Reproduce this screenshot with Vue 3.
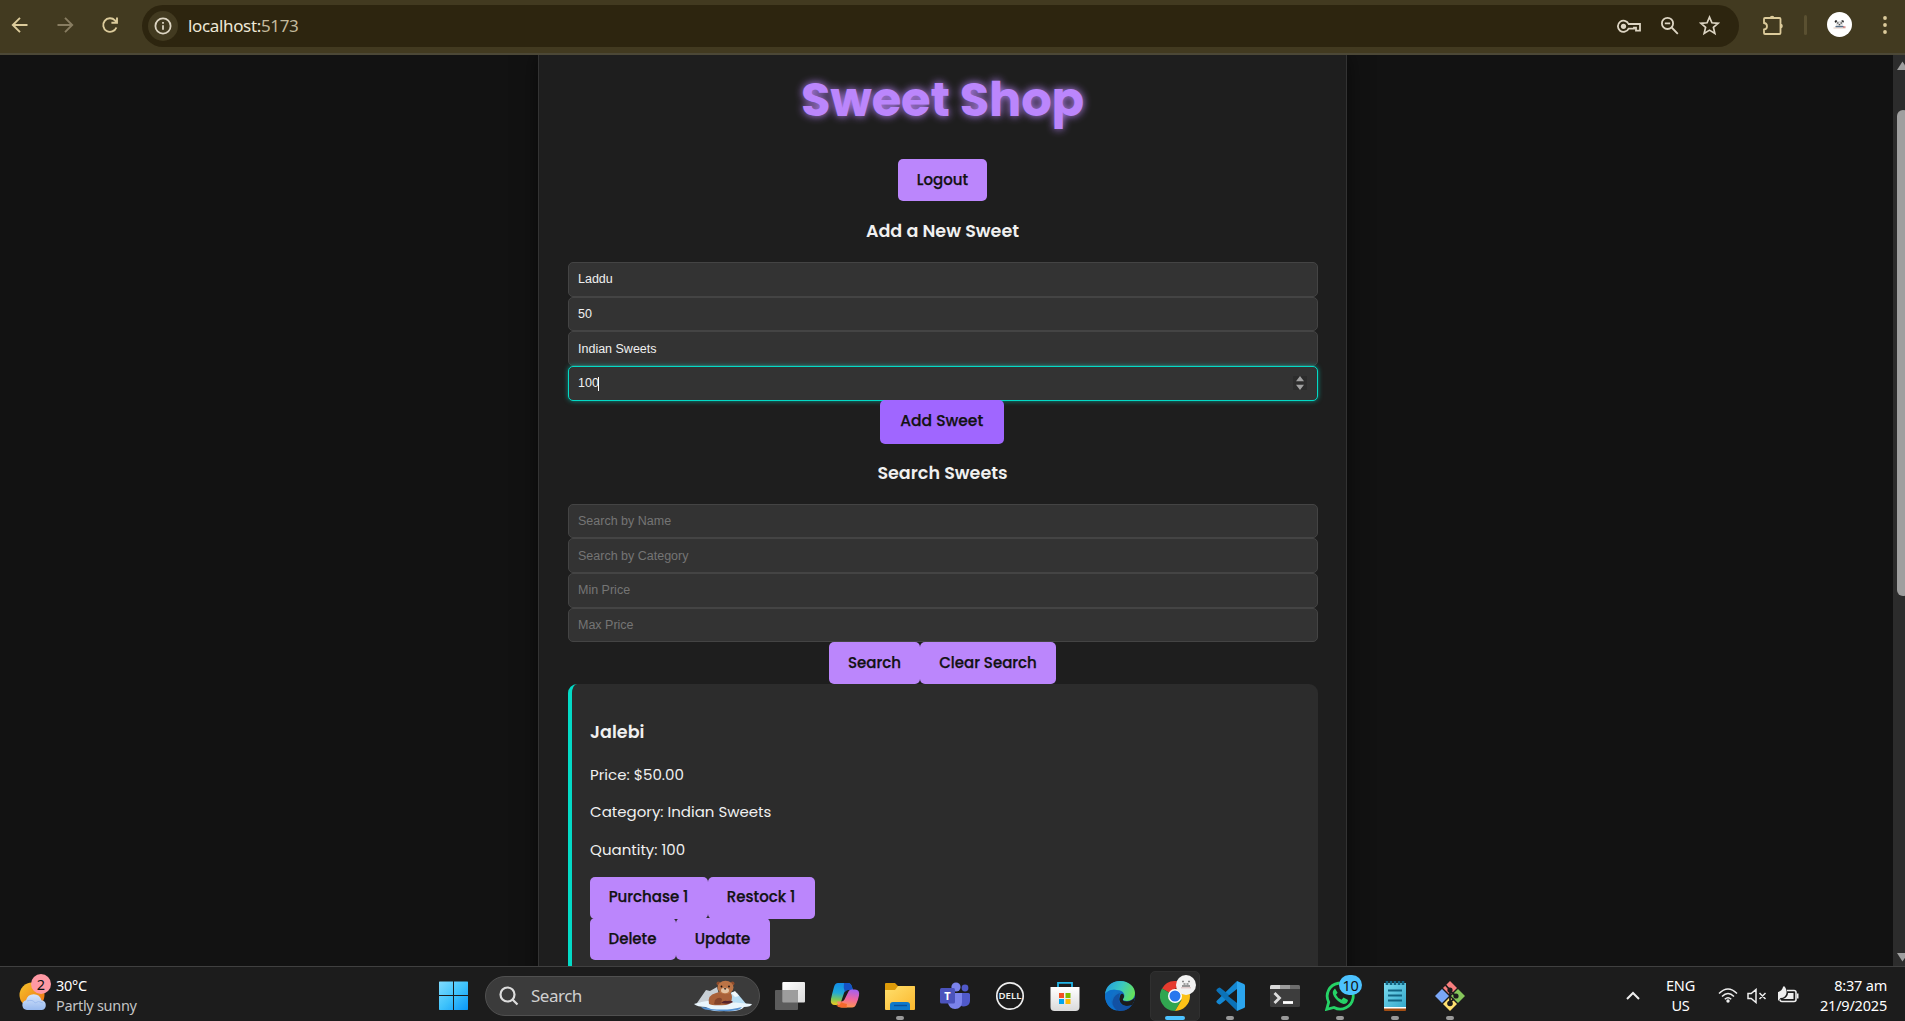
<script setup>
const newSweet = [
  { value: 'Laddu' },
  { value: '50' },
  { value: 'Indian Sweets' },
  { value: '100', active: true },
]
const searchFields = ['Search by Name', 'Search by Category', 'Min Price', 'Max Price']
</script>

<template>
  <div class="screen">
    <header class="toolbar">
      <nav class="nav-icons">
        <svg viewBox="0 0 20 20" class="nav-icon"><path d="M17.5 10H3.2M10 2.8 2.8 10l7.2 7.2" /></svg>
        <svg viewBox="0 0 20 20" class="nav-icon dim"><path d="M2.5 10h14.3M10 2.8l7.2 7.2-7.2 7.2" /></svg>
        <svg viewBox="0 0 20 20" class="nav-icon"><path d="M16.4 12.5A6.8 6.8 0 1 1 15 5.4l1.6 1.8M17 2.5v5.3h-5.6" /></svg>
      </nav>
      <div class="omnibox">
        <span class="site-info">
          <svg viewBox="0 0 18 18" width="18" height="18"><circle cx="9" cy="9" r="7.6" /><path d="M9 8.2v4.6M9 5v1.8" /></svg>
        </span>
        <span class="url">localhost:<span class="port">5173</span></span>
        <div class="omni-actions">
          <svg viewBox="0 0 24 20" width="24" height="20"><path d="M11.6 8H23v6.600h-4v-3h-2v1h-5.400a5.600 5.600 0 1 1 0-4.600z" /><circle cx="6.500" cy="10.300" r="2.600" class="solid" /></svg>
          <svg viewBox="0 0 20 20" width="20" height="20"><circle cx="7.500" cy="7.400" r="5.600" /><path d="M11.700 11.500 17.800 17.800M4.800 7.400h5.400" /></svg>
          <svg viewBox="0 0 20 20" width="21" height="21"><path d="m10 2 2.300 5.400 5.900.5-4.500 3.800 1.400 5.800-5.100-3.100-5.100 3.100 1.400-5.800L1.800 7.900l5.900-.5z" stroke-width="1.600" /></svg>
        </div>
      </div>
      <svg class="puzzle" viewBox="0 0 22 22" width="22" height="22"><path d="M3 4h14.500q1 0 1 1v14q0 1-1 1H3q-1 0-1-1v-3.500q3-.3 3-3.300t-3-3.200V5q0-1 1-1z" /><path class="fill" d="M7.800 4a2.300 2.300 0 0 1 4.600 0zM18.500 9.800a2.300 2.300 0 0 1 0 4.600z" /></svg>
      <span class="divider"></span>
      <span class="avatar">
        <svg viewBox="0 0 25 25" width="25" height="25"><circle cx="9" cy="9.500" r="1.300" fill="#222" /><circle cx="15.500" cy="9.500" r="1.300" fill="#222" /><rect x="9" y="9" width="7" height="6" rx="2.500" fill="#e2e2e2" /><path d="M10 11h1.500M13.500 11H15M11.700 12.700h1.500" stroke="#222" stroke-width="1.100" /><path d="M8.500 14.700h8" stroke="#55708a" stroke-width="1.600" /><path d="M6.500 16h12" stroke="#e3c9bd" /><path d="M16 15h2.500" stroke="#bd4a4a" /></svg>
      </span>
      <svg class="kebab" viewBox="0 0 4 20" width="4" height="20"><circle cx="2" cy="3" r="1.900" /><circle cx="2" cy="10" r="1.900" /><circle cx="2" cy="17" r="1.900" /></svg>
    </header>

    <div class="viewport">
      <main class="page">
        <section class="app">
          <h1>Sweet Shop</h1>
          <button class="btn logout">Logout</button>

          <h3 class="t-add">Add a New Sweet</h3>
          <form class="fields">
            <div v-for="field in newSweet" :key="field.value" class="field" :class="{ active: field.active }">
              <input type="text" :value="field.value" />
              <span v-if="field.active" class="caret"></span>
              <span v-if="field.active" class="spinner">
                <svg viewBox="0 0 14 14" width="14" height="14"><path d="M7 0l4 5.300H3zM7 14l4-5.300H3z" /></svg>
              </span>
            </div>
          </form>
          <button class="btn add">Add Sweet</button>

          <h3 class="t-search">Search Sweets</h3>
          <form class="fields">
            <div v-for="label in searchFields" :key="label" class="field">
              <input type="text" :placeholder="label" />
            </div>
          </form>
          <div class="row">
            <button class="btn search">Search</button><button class="btn clear">Clear Search</button>
          </div>

          <article class="card">
            <h3>Jalebi</h3>
            <p class="price">Price: $50.00</p>
            <p class="category">Category: Indian Sweets</p>
            <p class="quantity">Quantity: 100</p>
            <div class="row left">
              <button class="btn purchase">Purchase 1</button><button class="btn restock">Restock 1</button>
            </div>
            <div class="row left">
              <button class="btn delete">Delete</button><button class="btn update">Update</button>
            </div>
          </article>
        </section>
      </main>
      <aside class="scrollbar">
        <svg viewBox="0 0 14 10" width="14" height="10"><path d="M6.500.5 12 9H1z" /></svg>
        <span class="thumb"></span>
        <svg viewBox="0 0 14 10" width="14" height="10" class="down"><path d="M6.500 9.500 12 1H1z" /></svg>
      </aside>
    </div>

    <footer class="taskbar">
      <div class="weather">
        <svg viewBox="0 0 32 38" width="32" height="38">
          <defs>
            <linearGradient id="sun" x1="0" y1="0" x2="1" y2="1"><stop offset="0" stop-color="#f5c52c" /><stop offset="1" stop-color="#ee6c10" /></linearGradient>
            <linearGradient id="cloud" x1="0" y1="0" x2="0" y2="1"><stop offset="0" stop-color="#d7e6fc" /><stop offset="1" stop-color="#98b9ee" /></linearGradient>
          </defs>
          <circle cx="13" cy="22" r="12.500" fill="url(#sun)" />
          <path d="M8 37a5 5 0 0 1-1-9.800 8 8 0 0 1 15.500 0A5 5 0 0 1 23 37z" fill="url(#cloud)" />
          <path d="M8 28q6-2 8 2 3-3 8 0" fill="none" stroke="#9fbdef" />
        </svg>
        <span class="badge red">2</span>
        <div class="weather-text"><span>30°C</span><span class="sub">Partly sunny</span></div>
      </div>

      <div class="dock">
        <svg class="start" viewBox="0 0 30 30" width="30" height="30">
          <defs><linearGradient id="win" gradientUnits="userSpaceOnUse" x1="0" y1="0" x2="30" y2="30"><stop offset="0" stop-color="#84ddff" /><stop offset=".5" stop-color="#40c3fb" /><stop offset="1" stop-color="#0795f8" /></linearGradient></defs>
          <path fill="url(#win)" d="M1.500.500h13.500V14H1V1zM16 .500h13.500l.5.500v13h-14zM1 15h14v14H1.500l-.5-.500zM16 15h14v13.500l-.5.500H16z" />
        </svg>
        <div class="search-pill">
          <svg viewBox="0 0 20 20" width="20" height="20" class="lens"><circle cx="8.500" cy="8.500" r="7" /><path d="m13.500 13.500 5 5" /></svg>
          <span>Search</span>
          <svg viewBox="0 0 60 32" width="60" height="32" class="otter">
            <path d="M4 23 13 10l4 1 7-4 4 15z" fill="#c9d0d6" />
            <path d="m31 21 8-9 5 1 10 12z" fill="#b7ddf3" />
            <path d="m38 13 4-2 4 5-4 1z" fill="#f0f8fc" />
            <path d="M1 24q14-5 29-3t29 3q-1 3-8 3-3 5-20 4-15 1-18-4-9 0-12-3z" fill="#e9f5fc" />
            <path d="M8 27q7 0 10 2 12 1 21 0 6-1 10-2-2 3-7 3.500-8 1.500-22 0-10-.5-12-3.500z" fill="#5590cf" />
            <path d="M16 24q-2-9 7-11 5-2 10-2 6 1 6 6 0 7-6 8-14 1-17-1z" fill="#a9613a" />
            <path d="M22 20q4-4 7-1l-1 5q-4 1-7 0z" fill="#84452c" />
            <circle cx="25.500" cy="3.500" r="2" fill="#8e4c2c" /><circle cx="39.500" cy="3.500" r="2" fill="#8e4c2c" />
            <ellipse cx="32.500" cy="7.500" rx="8" ry="6.700" fill="#bb7446" />
            <ellipse cx="32" cy="10.500" rx="4" ry="2.800" fill="#e5c4a4" />
            <circle cx="28.500" cy="6.500" r=".9" fill="#181010" /><circle cx="36" cy="6.500" r=".9" fill="#181010" />
            <path d="M30.700 8.200h2.800l-1.400 1.700z" fill="#181010" />
            <path d="M28 23q3-3 6-2 5-1 6 1-3 3-12 1z" fill="#56232b" />
          </svg>
        </div>

        <div class="cell">
          <svg viewBox="0 0 30 30" width="30" height="30">
            <defs><linearGradient id="tv" x1="0" y1="0" x2="1" y2="1"><stop offset="0" stop-color="#fff" /><stop offset="1" stop-color="#dadada" /></linearGradient></defs>
            <rect x="7.300" y="1" width="22.700" height="20.500" rx="1" fill="url(#tv)" /><rect x="0" y="9" width="23" height="20" rx="1" fill="#5c5c5c" /><path d="M7.300 9H22q1 0 1 1v11.500H8.300q-1 0-1-1z" fill="#9d9d9d" />
          </svg>
        </div>
        <div class="cell">
          <svg viewBox="0 0 30 30" width="30" height="30">
            <defs>
              <linearGradient id="cp1" x1=".4" y1="0" x2=".3" y2="1"><stop offset="0" stop-color="#118ce8" /><stop offset=".45" stop-color="#20a9d8" /><stop offset=".75" stop-color="#7bc75a" /><stop offset="1" stop-color="#f0ca20" /></linearGradient>
              <linearGradient id="cp2" x1=".6" y1="0" x2=".4" y2="1"><stop offset="0" stop-color="#a660ee" /><stop offset=".5" stop-color="#f066a0" /><stop offset="1" stop-color="#ff9b48" /></linearGradient>
            </defs>
            <path d="M8 2h10q3 0 4 4l1 3h-5q-3 0-4 3l-3 9q-1 3-5 3H5q-5 0-4-6 1-5 3-12 1-4 4-4z" fill="url(#cp1)" />
            <path d="M15 2h3q3 0 4 4l1 3h-5q-2 0-3 2-2-4-1-9z" fill="#1551c5" />
            <path d="M22 26.500H12q-3 0-4-3l-1-3h4q3 0 4-3l3-6q1-3 4-3h3q5 0 4 6-1 5-3 9-1 3-4 3z" fill="url(#cp2)" />
            <path d="M6 24q4 1 5-3l2 1 4 1q-1 3 0 3.500h-6q-3 0-5-2.500z" fill="#f4692c" />
          </svg>
        </div>
        <div class="cell open">
          <svg viewBox="0 0 30 30" width="30" height="30">
            <defs><linearGradient id="fold" x1="0" y1="0" x2="1" y2="1"><stop offset="0" stop-color="#ffe06d" /><stop offset="1" stop-color="#fbb72d" /></linearGradient></defs>
            <path d="M0 3q0-1 1-1h9l3 3h16q1 0 1 1v5H0z" fill="#dd9b09" /><path d="M0 9h10l3-4h16q1 0 1 1v22q0 1-1 1H1q-1 0-1-1z" fill="url(#fold)" />
            <path d="M5 29v-5q0-3 3-3h14q3 0 3 3v5z" fill="#0d79cb" /><path d="M9 24.500h13" stroke="#07509a" stroke-width="1.400" />
          </svg>
        </div>
        <div class="cell">
          <svg viewBox="0 0 30 30" width="30" height="30">
            <circle cx="25" cy="7" r="3.400" fill="#5059c9" /><circle cx="16" cy="6" r="4.600" fill="#7b83eb" />
            <path d="M20 12h8.500q1.500 0 1.500 1.500V20a6 6 0 0 1-10 4z" fill="#5059c9" /><path d="M8 12h14v9q0 6.500-7 7-6-.5-7-6z" fill="#7b83eb" /><rect y="7" width="15" height="15.500" rx="1.500" fill="#4b53bc" /><text x="7.500" y="18.500" fill="#fff" font-size="11" font-weight="700" text-anchor="middle">T</text>
          </svg>
        </div>
        <div class="cell">
          <svg viewBox="0 0 30 30" width="30" height="30"><circle cx="15" cy="15" r="13.200" fill="none" stroke="#eee" stroke-width="1.700" /><text x="15" y="18.200" text-anchor="middle" fill="#eee" font-size="9" font-weight="600" textLength="23" lengthAdjust="spacingAndGlyphs">DELL</text></svg>
        </div>
        <div class="cell">
          <svg viewBox="0 0 30 30" width="30" height="30">
            <defs><linearGradient id="store" x1="0" y1="0" x2="0" y2="1"><stop offset="0" stop-color="#fff" /><stop offset="1" stop-color="#dadada" /></linearGradient></defs>
            <path d="M.500 6h29v20q0 4-4 4h-21q-4 0-4-4z" fill="url(#store)" /><path d="M8 6V1.800h14V6" fill="none" stroke="#21b6e9" stroke-width="1.800" />
            <path fill="#f25022" d="M9 12h5v5H9z" /><path fill="#7fba00" d="M15.500 12h5v5h-5z" /><path fill="#00a4ef" d="M9 18h5v5H9z" /><path fill="#ffb900" d="M15.500 18h5v5h-5z" />
          </svg>
        </div>
        <div class="cell">
          <svg viewBox="0 0 30 30" width="30" height="30">
            <defs>
              <linearGradient id="ed1" x1="0" y1=".3" x2="1" y2=".6"><stop offset="0" stop-color="#239fe0" /><stop offset=".5" stop-color="#3bc9bf" /><stop offset="1" stop-color="#67e255" /></linearGradient>
              <linearGradient id="ed2" x1="0" y1="0" x2="1" y2="1"><stop offset="0" stop-color="#1787dd" /><stop offset="1" stop-color="#0a4a9d" /></linearGradient>
            </defs>
            <circle cx="15" cy="15" r="15" fill="url(#ed2)" />
            <path d="M0 13C1 5 7 0 15 0c9 0 15 6 15 12 0 5-3.500 8-8 8-3 0-4.500-1-4-2 3-3 1-9-6-9Q4 8 0 13z" fill="url(#ed1)" />
            <path d="M0 14q3-6 11-5-6 5-5 11 1 6 6 9.500Q1 28 0 14z" fill="#0e70ca" />
            <path d="M18 18q-1 2.500 4 2.500 4 0 8-4l-1 4-2 3.500q-5 2-9 0-5-3-3-9 1-3 3-2 2 2 0 5z" fill="#1c1c1c" />
            <path d="M14 16q-1 8 7 9 4 0 6-1-6 8-15 5-6-5-4-10 1-5 7-7z" fill="#1251a3" />
          </svg>
        </div>
        <div class="cell current">
          <svg viewBox="0 0 30 30" width="30" height="30">
            <path d="M15 15 2 7.500A15 15 0 0 1 28 7.500H15z" fill="#e53b2e" /><path d="M15 15v15A15 15 0 0 1 2 7.500z" fill="#31a650" /><path d="M15 30 21.500 18.700 15 15l-4 5z" fill="#31a650" /><path d="M15 8h13.300a15 15 0 0 1 1.700 7A15 15 0 0 1 15 30l6.500-11z" fill="#fbc117" />
            <circle cx="15" cy="15" r="7" fill="#fff" /><circle cx="15" cy="15" r="5.500" fill="#2877ee" />
          </svg>
          <span class="profile"><svg viewBox="0 0 20 20" width="20" height="20"><path d="M6 6.500h2M12 6.500h2M7.500 9h2M10.500 9h2" stroke="#888" stroke-width="1.300" /><path d="M6 11h8" stroke="#777" stroke-width="1.500" /><path d="M5 12.800h10" stroke="#d9b9b9" stroke-width="1" /></svg></span>
        </div>
        <div class="cell open">
          <svg viewBox="0 0 30 30" width="30" height="30">
            <path d="M22 0 2 19.500q-1.500 1.200 0 2.400l1.400 1.200q1 .8 2.200 0L23 9z" fill="#1487d2" /><path d="M22 30 2 10.500q-1.500-1.200 0-2.400l1.400-1.200q1-.8 2.200 0L23 21z" fill="#0b72b8" /><path d="m22 0 7 3q1 .5 1 1.500v21q0 1-1 1.500l-7 3z" fill="#2ba5ee" /><path d="M22 8v14l-9-7z" fill="#1c1c1c" />
          </svg>
        </div>
        <div class="cell open">
          <svg viewBox="0 0 30 30" width="30" height="30"><rect y="4" width="30" height="22" rx="1.500" fill="#3d3d3d" /><path d="M0 8V5.500Q0 4 1.500 4H10v4z" fill="#d8d8d8" /><path d="M10 4h10v4H10z" fill="#9b9b9b" /><path d="M20 4h8.500Q30 4 30 5.500V8H20z" fill="#6d6d6d" /><path d="m4.500 12 5 5-5 5" fill="none" stroke="#ddd" stroke-width="2.800" /><path d="M13 21.500h10" stroke="#fff" stroke-width="2.800" /></svg>
        </div>
        <div class="cell open">
          <svg viewBox="0 0 30 30" width="30" height="30"><path d="m1.700 28.300 2-7.200A13 13 0 1 1 9 26.500z" fill="none" stroke="#25d366" stroke-width="2.800" /><path d="M10 7.500q-4 3-1 8 4 6 9.500 7.500 4 0 4.500-4l-4.500-2.500-2 2.200q-4-1.500-5.500-5l1.600-2z" fill="#25d366" /></svg>
          <span class="badge blue">10</span>
        </div>
        <div class="cell open">
          <svg viewBox="0 0 30 30" width="30" height="30">
            <defs><linearGradient id="note" x1="0" y1="0" x2="1" y2="1"><stop offset="0" stop-color="#7bdcf0" /><stop offset="1" stop-color="#35a9cc" /></linearGradient></defs>
            <path d="M4 23h22v6q0 1-1 1H5q-1 0-1-1z" fill="#a44e13" /><path d="M4 24h22v3.500H4z" fill="#fff" /><path d="M4 2h22v24H4z" fill="url(#note)" /><path d="M8 9.500h14M8 14.500h14M8 19.500h14" stroke="#126483" stroke-width="1.800" /><path d="M7 0v4M11 0v4M15 0v4M19 0v4M23 0v4" stroke="#126483" stroke-width="2.600" />
          </svg>
        </div>
        <div class="cell open">
          <svg viewBox="0 0 30 30" width="30" height="30"><path d="m15 0 7 7-7 7-7-7z" fill="#f77e7e" /><path d="m7 8 7 7-7 7-7-7z" fill="#7aa7f7" /><path d="m23 8 7 7-7 7-7-7z" fill="#86c65b" /><path d="m15 16 7 7-7 7-7-7z" fill="#ffe070" /><path d="M10.500 4 15 9v14M15 10l6 5M15 21l4-3" fill="none" stroke="#1c1c1c" stroke-width="1.800" /><g fill="#1c1c1c"><circle cx="15" cy="9" r="2.600" /><circle cx="21" cy="15" r="2.600" /><circle cx="15" cy="22.500" r="2.800" /></g></svg>
        </div>
      </div>

      <div class="tray">
        <svg viewBox="0 0 14 10" width="14" height="10" class="chev"><path d="m1 8 6-6 6 6" /></svg>
        <div class="lang"><span>ENG</span><span>US</span></div>
        <svg viewBox="0 0 20 16" width="20" height="16" class="wifi"><path d="M1 6.500q9-9 18 0M4 9.500q6-6 12 0M6.800 12.300q3.200-3.200 6.400 0" /><circle cx="10" cy="14" r="1.700" /></svg>
        <svg viewBox="0 0 20 16" width="20" height="16" class="sound"><path d="M1 5.500h3.200L9 1.500v13l-4.800-4H1zM12.500 5l6 6M18.500 5l-6 6" /></svg>
        <svg viewBox="0 0 22 18" width="22" height="18" class="battery"><path d="M10 4.500h7q2 0 2 2v7q0 2-2 2H5q-2 0-2-2" class="line" /><path d="M1 11V6q4-1 5-5l1-1q3 3 2.500 7-1 5-6 5L1 15zM11 7h5.500v6H6q5-2 5-6z" /><path d="M20 7.500h1.500v5H20z" /></svg>
        <div class="clock"><span>8:37 am</span><span>21/9/2025</span></div>
      </div>
    </footer>
  </div>
</template>

<style>
body { margin: 0; background: #121212; overflow: hidden; }
</style>

<style scoped>
.screen { width: 1905px; height: 1021px; display: flex; flex-direction: column; overflow: hidden; font-family: "Segoe UI", "Noto Sans", sans-serif; }
svg { display: block; flex: none; }
* { box-sizing: border-box; }

.toolbar { height: 55px; flex: none; display: flex; align-items: center; background: #423a20; border-bottom: 2px solid #4c4837; padding-bottom: 4px; }
.nav-icons { display: flex; gap: 25px; margin-left: 10px; width: 132px; }
.nav-icon { width: 20px; height: 20px; fill: none; stroke: #dccb9b; stroke-width: 1.9; }
.dim { stroke: #887d61; }
.omnibox { width: 1597px; height: 42px; border-radius: 21px; background: #2d250f; display: flex; align-items: center; padding: 0 19px 0 6px; margin-top: 2px; }
.site-info { width: 30px; height: 30px; border-radius: 50%; background: #423a20; display: grid; place-items: center; }
.site-info svg, .omni-actions svg { fill: none; stroke: #ddd5c3; stroke-width: 1.8; }
.url { margin-left: 10px; font-size: 17px; letter-spacing: -.35px; color: #eee8d7; line-height: 24px; }
.port { color: #c3b99c; }
.omni-actions { margin-left: auto; display: flex; align-items: center; gap: 19px; }
.omni-actions .solid { fill: #ddd5c3; stroke: none; }
.puzzle { margin-left: 23px; fill: none; stroke: #dccb9b; stroke-width: 1.8; }
.puzzle .fill { fill: #dccb9b; stroke: none; }
.divider { width: 3px; height: 20px; border-radius: 2px; background: #5a5031; margin-left: 20px; }
.avatar { width: 25px; height: 25px; border-radius: 50%; background: #fff; margin-left: 20px; }
.kebab { margin-left: 31px; fill: #dccb9b; }

.viewport { height: 911px; flex: none; display: flex; overflow: hidden; background: #121212; }
.page { width: 1893px; padding-left: 538px; overflow: hidden; }
.scrollbar { width: 12px; background: #2c2c2c; display: flex; flex-direction: column; padding: 6px 0 4px 3px; overflow: hidden; }
.scrollbar svg { fill: #9f9f9f; }
.thumb { width: 12px; height: 486px; margin: 39px 0 0 1px; border-radius: 6px; background: #9f9f9f; }
.scrollbar .down { margin-top: auto; }

.app { width: 809px; height: 1100px; padding: 0 29px; background: #1e1e1e; border: solid #333; border-width: 0 1px; box-shadow: 0 0 20px rgba(0, 0, 0, .5); display: flex; flex-direction: column; align-items: center; font-family: Poppins, Inter, sans-serif; color: #f0f0f0; }
h1, h3, p { margin: 0; }
h1 { font-size: 48px; font-weight: 700; line-height: 90px; height: 104px; color: #bb86fc; text-shadow: 0 0 8px #bb86fc; white-space: nowrap; letter-spacing: -.2px; }
h3 { font-size: 17.550px; font-weight: 600; }
.t-add { line-height: 61px; height: 61px; }
.t-search { line-height: 59px; height: 60px; }
.btn { height: 42px; flex: none; padding: 0 0 2px; border: 0; border-radius: 5px; background: #bb86fc; color: #121212; font: 500 15px Poppins, Inter, sans-serif; -webkit-text-stroke: .25px #121212; white-space: nowrap; }
.logout { width: 89px; }
.add { width: 124px; height: 44px; margin: -1px 1.500px 0 0; background: #a066ff; position: relative; z-index: 2; font-size: 15.500px; }
.search { width: 91px; }
.clear { width: 136px; }
.purchase { width: 118px; }
.restock { width: 107px; }
.delete { width: 86px; }
.update { width: 94px; }
.fields { width: 750px; height: 138.700px; flex: none; display: flex; flex-direction: column; }
.field { flex: 1; display: flex; position: relative; border: 1px solid #444; border-radius: 5px; background: #333; }
.field input { flex: 1; min-width: 0; padding: 0 9.500px; border: 0; outline: 0; background: none; color: #f0f0f0; font: 12.500px/32px "Liberation Sans", Arial, sans-serif; }
.field input::placeholder { color: #757575; opacity: 1; }
.field.active { border-color: #03dac6; box-shadow: 0 0 5px rgba(3, 218, 198, .6); z-index: 1; }
.caret { position: absolute; left: 29px; top: 10px; width: 1px; height: 14px; background: #fff; }
.spinner { position: absolute; right: 10px; top: 9px; background: #2c2c2c; }
.spinner svg { fill: #a0a0a0; }
.row { display: flex; }
.left { height: 41.500px; }
.card { width: 750px; height: 450px; padding: 25px 18px; background: #2c2c2c; border-left: 4px solid #03dac6; border-radius: 9px; }
.card h3 { line-height: 46.800px; padding-left: .6px; }
.card p { font-size: 15px; line-height: 37.300px; padding-left: .6px; }
.card .quantity { margin-bottom: 8.800px; }

.taskbar { height: 55px; flex: none; display: flex; background: #1c1c1c; border-top: 1px solid #404040; color: #fff; font-size: 14.500px; position: relative; }
.weather { width: 438px; padding: 6px 0 0 19px; display: flex; position: relative; }
.weather-text, .lang, .clock { display: flex; flex-direction: column; line-height: 20px; padding-top: 8px; letter-spacing: -.2px; }
.weather-text { padding: 2px 0 0 5px; letter-spacing: -.3px; }
.weather .sub { color: #c4c4c4; }
.badge { position: absolute; border-radius: 12px; color: #111; text-align: center; }
.red { left: 31px; top: 7px; width: 20px; height: 20px; background: #ff99a4; line-height: 20px; }
.dock { display: flex; align-items: center; height: 57px; }
.start { width: 30px; }
.search-pill { width: 275px; height: 40px; margin: 0 2px 0 17px; border-radius: 20px; background: #3b3b3b; border: 1px solid #505050; display: flex; align-items: center; padding: 0 6px 0 13px; font-size: 17px; letter-spacing: -.5px; color: #d0d0d0; }
.lens { fill: none; stroke: #ddd; stroke-width: 2.200; margin-right: 12px; }
.otter { margin-left: auto; }
.cell { width: 50px; height: 50px; margin-right: 5px; display: grid; place-items: center; position: relative; border-radius: 5px; }
.search-pill + .cell { margin-left: 3px; }
.open::after, .current::after { content: ""; position: absolute; width: 8px; height: 4px; border-radius: 2px; background: #999; bottom: 1px; left: 21px; }
.current { background: #292929; border: 1px solid #303030; }
.current::after { width: 20px; left: 14px; background: #4cc2ff; bottom: 0; }
.profile { position: absolute; right: 3px; top: 3px; border-radius: 50%; background: #f2f2f2; }
.blue { left: 24px; top: 4px; width: 23px; height: 20px; line-height: 20px; background: #4cc2ff; letter-spacing: -.4px; }
.tray { margin-left: auto; display: flex; padding-right: 18px; }
.tray > svg { fill: none; stroke: #eee; stroke-width: 1.5; }
.chev { margin: 24px 26px 0 0; }
.tray .chev { stroke-width: 2; }
.lang { width: 29px; align-items: center; margin-right: 23px; }
.tray .wifi { margin: 20px 9px 0 0; }
.wifi circle { fill: #eee; stroke: none; }
.tray .sound { margin: 21px 10px 0 0; }
.tray .battery { margin: 19px 0 0; fill: #eee; stroke: none; }
.battery .line { fill: none; stroke: #eee; stroke-width: 1.6; }
.clock { width: 88px; text-align: right; }
</style>
